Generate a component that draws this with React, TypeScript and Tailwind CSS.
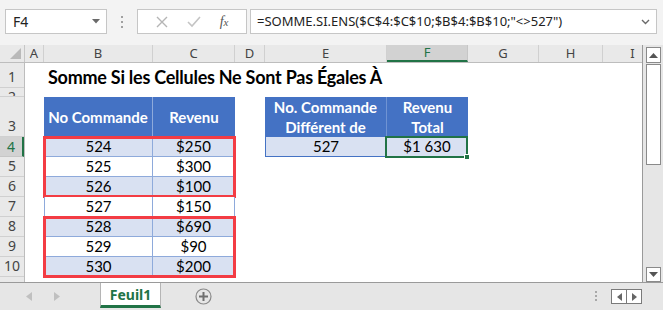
import React from "react";

const ui = "font-['Segoe_UI','Noto_Sans',sans-serif]";
const cell = "font-['Lato','Liberation_Sans',sans-serif]";

const colHeads = [
  { k: "A", w: "w-[19px]" },
  { k: "B", w: "w-[109px]" },
  { k: "C", w: "w-[82px]" },
  { k: "D", w: "w-[30px]" },
  { k: "E", w: "w-[122px]" },
  { k: "F", w: "w-[81px]" },
  { k: "G", w: "w-[71px]" },
  { k: "H", w: "w-[64px]" },
  { k: "I", w: "w-[60px]" },
];

const rowHeads = [
  { n: "1", h: "h-[25px]" },
  { n: "2", h: "h-[9px]" },
  { n: "3", h: "h-[40px]" },
  { n: "4", h: "h-[20px]" },
  { n: "5", h: "h-[20px]" },
  { n: "6", h: "h-[20px]" },
  { n: "7", h: "h-[20px]" },
  { n: "8", h: "h-[20px]" },
  { n: "9", h: "h-[20px]" },
  { n: "10", h: "h-[20px]" },
];

const orders = [
  ["524", "$250"],
  ["525", "$300"],
  ["526", "$100"],
  ["527", "$150"],
  ["528", "$690"],
  ["529", "$90"],
  ["530", "$200"],
];

function DataRow({ a, b, shade }: { a: string; b: string; shade: boolean }) {
  return (
    <div className={shade ? "flex h-[20px] bg-[#d9e1f2]" : "flex h-[20px] bg-white"}>
      <div className="w-[109px] flex items-center justify-center border-l border-r border-b border-[#8eaadb]">{a}</div>
      <div className="w-[82px] flex items-center justify-center border-r border-b border-[#8eaadb]">{b}</div>
    </div>
  );
}

function FormulaBar() {
  return (
    <div className={`h-[45px] flex items-start pt-[9px] pl-[5px] ${ui}`}>
      <div className="w-[102px] h-[25px] bg-white border border-[#c6c6c6] flex items-center justify-between pl-[7px] pr-[6px] text-[14px] text-[#222]">
        <span>F4</span>
        <svg width="8" height="5" viewBox="0 0 8 5"><path d="M0 0h8L4 4.5z" fill="#6a6a6a" /></svg>
      </div>
      <div className="w-[30px] h-[25px] flex flex-col items-center justify-center gap-[3px]">
        <span className="w-[2px] h-[2px] bg-[#a0a0a0]" />
        <span className="w-[2px] h-[2px] bg-[#a0a0a0]" />
        <span className="w-[2px] h-[2px] bg-[#a0a0a0]" />
      </div>
      <div className="w-[110px] h-[25px] bg-white border border-[#c6c6c6] flex items-center justify-around px-[8px]">
        <svg width="12" height="12" viewBox="0 0 12 12"><path d="M1 1l10 10M11 1L1 11" stroke="#b5b5b5" strokeWidth="1.4" /></svg>
        <svg width="14" height="12" viewBox="0 0 14 12"><path d="M1 6l4 4L13 1" stroke="#c4c4c4" strokeWidth="1.6" fill="none" /></svg>
        <span className="font-['Liberation_Serif',serif] italic text-[14px] text-[#555]">
          f<span className="text-[11px]">x</span>
        </span>
      </div>
      <div className="ml-[3px] w-[407px] h-[25px] bg-white border border-[#c6c6c6] flex items-center justify-between pl-[6px] pr-[6px] text-[13px] text-[#222]">
        <span>=SOMME.SI.ENS($C$4:$C$10;$B$4:$B$10;"&lt;&gt;527")</span>
        <svg width="9" height="6" viewBox="0 0 9 6"><path d="M1 1l3.5 3.5L8 1" stroke="#6a6a6a" strokeWidth="1.4" fill="none" /></svg>
      </div>
    </div>
  );
}

function ColumnHeaders() {
  return (
    <div className={`flex h-[18px] bg-[#e9e9e9] border-b border-[#bdbdbd] text-[14px] text-[#444] ${ui}`}>
      <div className="w-[25px] shrink-0 border-r border-[#c6c6c6] flex items-end justify-end pr-[3px] pb-[3px]">
        <svg width="11" height="11" viewBox="0 0 11 11"><path d="M11 0v11H0z" fill="#b9b9b9" /></svg>
      </div>
      {colHeads.map((c) =>
        c.k === "F" ? (
          <div key={c.k} className={`${c.w} shrink-0 bg-[#d2d2d2] border-r border-[#c6c6c6] border-b-2 border-b-[#217346] text-[#217346] flex items-center justify-center text-[13px] leading-[15px]`}>
            {c.k}
          </div>
        ) : (
          <div key={c.k} className={`${c.w} shrink-0 border-r border-[#d0d0d0] flex items-center justify-center text-[13px] leading-[15px]`}>
            {c.k}
          </div>
        )
      )}
    </div>
  );
}

function RowHeaders() {
  return (
    <div className={`w-[25px] shrink-0 flex flex-col bg-[#e9e9e9] border-r border-[#bdbdbd] text-[14px] text-[#444] ${ui}`}>
      {rowHeads.map((r) =>
        r.n === "4" ? (
          <div key={r.n} className={`${r.h} bg-[#d2d2d2] border-b border-[#c6c6c6] border-r-2 border-r-[#217346] text-[#217346] flex items-center justify-center leading-none`}>
            {r.n}
          </div>
        ) : r.n === "2" ? (
          <div key={r.n} className={`${r.h} border-b border-[#d0d0d0] flex items-start justify-center leading-none overflow-hidden pt-[2px]`}>
            {r.n}
          </div>
        ) : (
          <div key={r.n} className={`${r.h} border-b border-[#d0d0d0] flex items-end justify-center leading-none overflow-hidden pb-[3px]`}>
            {r.n}
          </div>
        )
      )}
      <div className="flex-1" />
    </div>
  );
}

function SheetBody() {
  const red = "outline outline-solid outline-[3px] outline-[#f33c44] -outline-offset-2";
  return (
    <div className={`flex-1 flex flex-col bg-white text-[15px] text-black ${cell}`}>
      <div className="h-[25px] flex items-end pl-[23px] pb-[2px] text-[18px] tracking-[-0.25px] font-bold leading-none">
        Somme Si les Cellules Ne Sont Pas Égales À
      </div>
      <div className="h-[9px]" />
      <div className="flex">
        <div className="w-[19px]" />
        <div className="w-[191px] flex flex-col">
          <div className="h-[40px] flex bg-[#4472c4] text-white font-bold">
            <div className="w-[109px] flex items-center justify-center border-r border-[#8eaadb]">No Commande</div>
            <div className="w-[82px] flex items-center justify-center">Revenu</div>
          </div>
          <div className={red}>
            {orders.slice(0, 3).map((o, i) => (
              <DataRow key={o[0]} a={o[0]} b={o[1]} shade={i % 2 === 0} />
            ))}
          </div>
          <DataRow a={orders[3][0]} b={orders[3][1]} shade={false} />
          <div className={red}>
            {orders.slice(4).map((o, i) => (
              <DataRow key={o[0]} a={o[0]} b={o[1]} shade={i % 2 === 0} />
            ))}
          </div>
        </div>
        <div className="w-[30px]" />
        <div className="w-[203px] flex flex-col">
          <div className="h-[40px] flex bg-[#4472c4] text-white font-bold leading-[20px] text-center">
            <div className="w-[122px] flex items-center justify-center border-r border-[#6f93d3]">
              No. Commande
              <br />
              Différent de
            </div>
            <div className="w-[81px] flex items-center justify-center">
              Revenu
              <br />
              Total
            </div>
          </div>
          <div className="h-[20px] flex bg-[#d9e1f2]">
            <div className="w-[122px] flex items-center justify-center border-l border-b border-r border-[#4472c4]">527</div>
            <div className="relative w-[81px] flex items-center justify-center border-b border-r border-[#4472c4]">
              $1 630
              <div className="absolute -left-[2px] -top-[1px] -right-[1px] -bottom-[2px] border-2 border-[#217346]" />
              <div className="absolute -right-[3px] -bottom-[4px] w-[6px] h-[6px] bg-[#217346] border border-white" />
            </div>
          </div>
        </div>
      </div>
    </div>
  );
}

function ScrollBar() {
  return (
    <div className="w-[20px] h-full bg-[#e6e6e6] flex flex-col pl-[3px] pr-[2px] pt-[2px]">
      <div className="h-[16px] bg-white border border-[#8a8a8a] flex items-center justify-center">
        <svg width="9" height="5" viewBox="0 0 9 5"><path d="M0 5h9L4.5 0z" fill="#555" /></svg>
      </div>
      <div className="mt-[1px] h-[101px] bg-white border border-[#8a8a8a]" />
      <div className="flex-1" />
      <div className="h-[15px] bg-white border border-[#8a8a8a] flex items-center justify-center">
        <svg width="9" height="5" viewBox="0 0 9 5"><path d="M0 0h9L4.5 5z" fill="#555" /></svg>
      </div>
    </div>
  );
}

function TabBar() {
  return (
    <div className={`h-[28px] flex items-start border-t border-[#9a9a9a] bg-[#e6e6e6] ${ui}`}>
      <div className="w-[100px] h-[26px] flex items-center pl-[26px] gap-[22px]">
        <svg width="6" height="9" viewBox="0 0 6 9"><path d="M6 0v9L0 4.5z" fill="#c0c0c0" /></svg>
        <svg width="6" height="9" viewBox="0 0 6 9"><path d="M0 0v9l6-4.5z" fill="#c0c0c0" /></svg>
      </div>
      <div className="w-[61px] h-[25px] bg-white border-l border-r border-[#b5b5b5] border-b-[3px] border-b-[#217346] flex items-center justify-center text-[14px] font-bold text-[#217346]">
        Feuil1
      </div>
      <div className="ml-[34px] h-[26px] flex items-center">
        <svg width="17" height="17" viewBox="0 0 17 17">
          <circle cx="8.5" cy="8.5" r="7.5" fill="none" stroke="#8a8a8a" strokeWidth="1.2" />
          <path d="M8.5 4v9M4 8.5h9" stroke="#707070" strokeWidth="2" />
        </svg>
      </div>
      <div className="flex-1" />
      <div className="h-[26px] flex flex-col justify-center gap-[2px] mr-[14px]">
        <span className="w-[2px] h-[2px] bg-[#a8a8a8]" />
        <span className="w-[2px] h-[2px] bg-[#a8a8a8]" />
        <span className="w-[2px] h-[2px] bg-[#a8a8a8]" />
      </div>
      <div className="mt-[6px] w-[31px] h-[15px] flex border border-[#7a7a7a] bg-white">
        <div className="flex-1 flex items-center justify-center border-r border-[#7a7a7a]">
          <svg width="5" height="8" viewBox="0 0 5 8"><path d="M5 0v8L0 4z" fill="#666" /></svg>
        </div>
        <div className="flex-1 flex items-center justify-center">
          <svg width="5" height="8" viewBox="0 0 5 8"><path d="M0 0v8l5-4z" fill="#666" /></svg>
        </div>
      </div>
      <div className="w-[21px]" />
    </div>
  );
}

export default function App() {
  return (
    <div className="w-[663px] h-[310px] bg-[#f3f3f3] flex flex-col overflow-hidden">
      <FormulaBar />
      <div className="h-[237px] flex">
        <div className="w-[643px] h-full flex flex-col overflow-hidden border-r border-[#9a9a9a]">
          <ColumnHeaders />
          <div className="flex flex-1">
            <RowHeaders />
            <SheetBody />
          </div>
        </div>
        <ScrollBar />
      </div>
      <TabBar />
    </div>
  );
}
